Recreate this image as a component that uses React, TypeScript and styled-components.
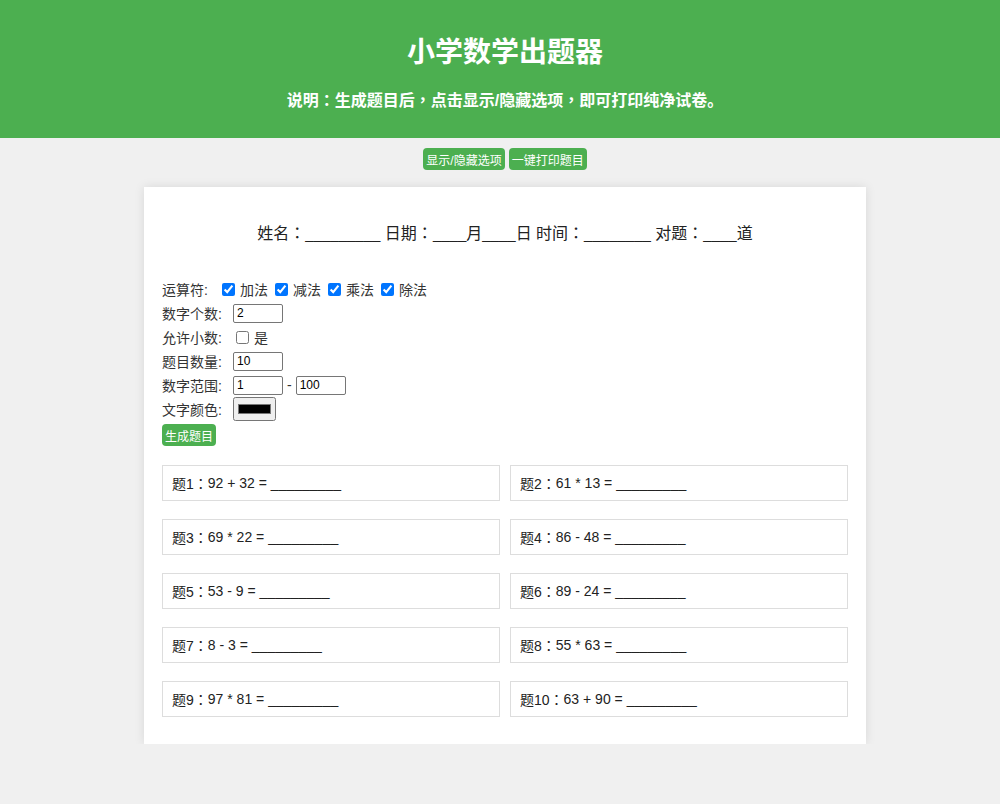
import React from "react";
import styled, { createGlobalStyle } from "styled-components";

const GlobalStyle = createGlobalStyle`
  body {
    margin: 0;
    background: #f0f0f0;
    font-family: "Liberation Sans", "Noto Sans CJK SC", Arial, sans-serif;
    color: #333;
  }
`;

// the original page is centred on x=505 (it sits 10px right of the window centre)
const Page = styled.div`
  padding-left: 10px;
`;

const Header = styled.header`
  background: #4caf50;
  color: #fff;
  text-align: center;
  height: 138px;
  box-sizing: border-box;
  padding-top: 35px;
  margin-left: -10px;
  padding-left: 10px;
`;

const Title = styled.h1`
  margin: 0;
  font-size: 28px;
  line-height: 36px;
  font-weight: bold;
`;

const Subtitle = styled.p`
  margin: 17px 0 0;
  font-size: 16px;
  line-height: 22px;
  font-weight: bold;
`;

// full-width punctuation drawn centred, as in the reference font
const Punct = styled.span`
  font-family: "Noto Sans CJK TC", "Noto Sans CJK SC", sans-serif;
`;

const Toolbar = styled.div`
  display: flex;
  justify-content: center;
  gap: 4px;
  margin-top: 10px;
`;

const GreenButton = styled.button`
  background: #4caf50;
  color: #fff;
  border: none;
  border-radius: 4px;
  height: 22px;
  padding: 0 3px;
  font-size: 12px;
  font-family: inherit;
  cursor: pointer;
`;

const Card = styled.main`
  width: 722px;
  box-sizing: border-box;
  margin: 17px auto 0;
  background: #fff;
  padding: 18px;
  box-shadow: 0 0 10px rgba(0, 0, 0, 0.1);
`;

const InfoLine = styled.div`
  text-align: center;
  font-size: 16px;
  line-height: 22px;
  margin: 16px 0 32px;
  color: #222;
`;

const Blank = styled.span`
  font-size: 15px;
`;

const Form = styled.div`
  font-size: 14px;
  color: #333;
`;

const Row = styled.div`
  display: flex;
  align-items: center;
  height: 24px;
`;

const Label = styled.span<{ $w: number }>`
  width: ${(p) => p.$w}px;
  flex: none;
`;

const Check = styled.label`
  display: inline-flex;
  align-items: center;
  margin-right: 7px;
  input {
    margin: 0 5px 0 0;
    width: 13px;
    height: 13px;
  }
`;

const TextInput = styled.input`
  width: 50px;
  height: 19px;
  box-sizing: border-box;
  font-size: 12px;
  padding: 1px 3px;
  border: 1px solid #767676;
  border-radius: 2px;
  font-family: inherit;
`;

const Dash = styled.span`
  margin: 0 4px;
`;

const ColorInput = styled.input`
  width: 43px;
  height: 24px;
  padding: 2px;
  box-sizing: border-box;
`;

const GenerateButton = styled(GreenButton)`
  margin-top: 3px;
`;

const Grid = styled.div`
  display: grid;
  grid-template-columns: 1fr 1fr;
  gap: 18px 10px;
  margin-top: 19px;
  margin-bottom: 9px;
`;

const Question = styled.div`
  box-sizing: border-box;
  border: 1px solid #ddd;
  padding: 0 9px;
  height: 36px;
  display: flex;
  align-items: center;
  font-size: 14px;
  color: #222;
  white-space: pre;
`;

const questions = [
  "92 + 32",
  "61 * 13",
  "69 * 22",
  "86 - 48",
  "53 - 9",
  "89 - 24",
  "8 - 3",
  "55 * 63",
  "97 * 81",
  "63 + 90",
];

const C = () => <Punct>：</Punct>;

function App() {
  return (
    <Page>
      <GlobalStyle />
      <Header>
        <Title>小学数学出题器</Title>
        <Subtitle>
          说明<C />生成题目后<Punct>，</Punct>点击显示/隐藏选项<Punct>，</Punct>即可打印纯净试卷。
        </Subtitle>
      </Header>
      <Toolbar>
        <GreenButton>显示/隐藏选项</GreenButton>
        <GreenButton>一键打印题目</GreenButton>
      </Toolbar>
      <Card>
        <InfoLine>
          姓名<C /><Blank>_________</Blank> 日期<C /><Blank>____</Blank>月
          <Blank>____</Blank>日 时间<C /><Blank>________</Blank> 对题<C />
          <Blank>____</Blank>道
        </InfoLine>
        <Form>
          <Row>
            <Label $w={60}>运算符:</Label>
            <Check>
              <input type="checkbox" defaultChecked />
              加法
            </Check>
            <Check>
              <input type="checkbox" defaultChecked />
              减法
            </Check>
            <Check>
              <input type="checkbox" defaultChecked />
              乘法
            </Check>
            <Check>
              <input type="checkbox" defaultChecked />
              除法
            </Check>
          </Row>
          <Row>
            <Label $w={71}>数字个数:</Label>
            <TextInput defaultValue="2" />
          </Row>
          <Row>
            <Label $w={74}>允许小数:</Label>
            <Check>
              <input type="checkbox" />
              是
            </Check>
          </Row>
          <Row>
            <Label $w={71}>题目数量:</Label>
            <TextInput defaultValue="10" />
          </Row>
          <Row>
            <Label $w={71}>数字范围:</Label>
            <TextInput defaultValue="1" />
            <Dash>-</Dash>
            <TextInput defaultValue="100" />
          </Row>
          <Row>
            <Label $w={71}>文字颜色:</Label>
            <ColorInput type="color" defaultValue="#000000" />
          </Row>
          <GenerateButton>生成题目</GenerateButton>
        </Form>
        <Grid>
          {questions.map((q, i) => (
            <Question key={i}>
              题{i + 1}<C />{q} = _________
            </Question>
          ))}
        </Grid>
      </Card>
    </Page>
  );
}

export default App;
